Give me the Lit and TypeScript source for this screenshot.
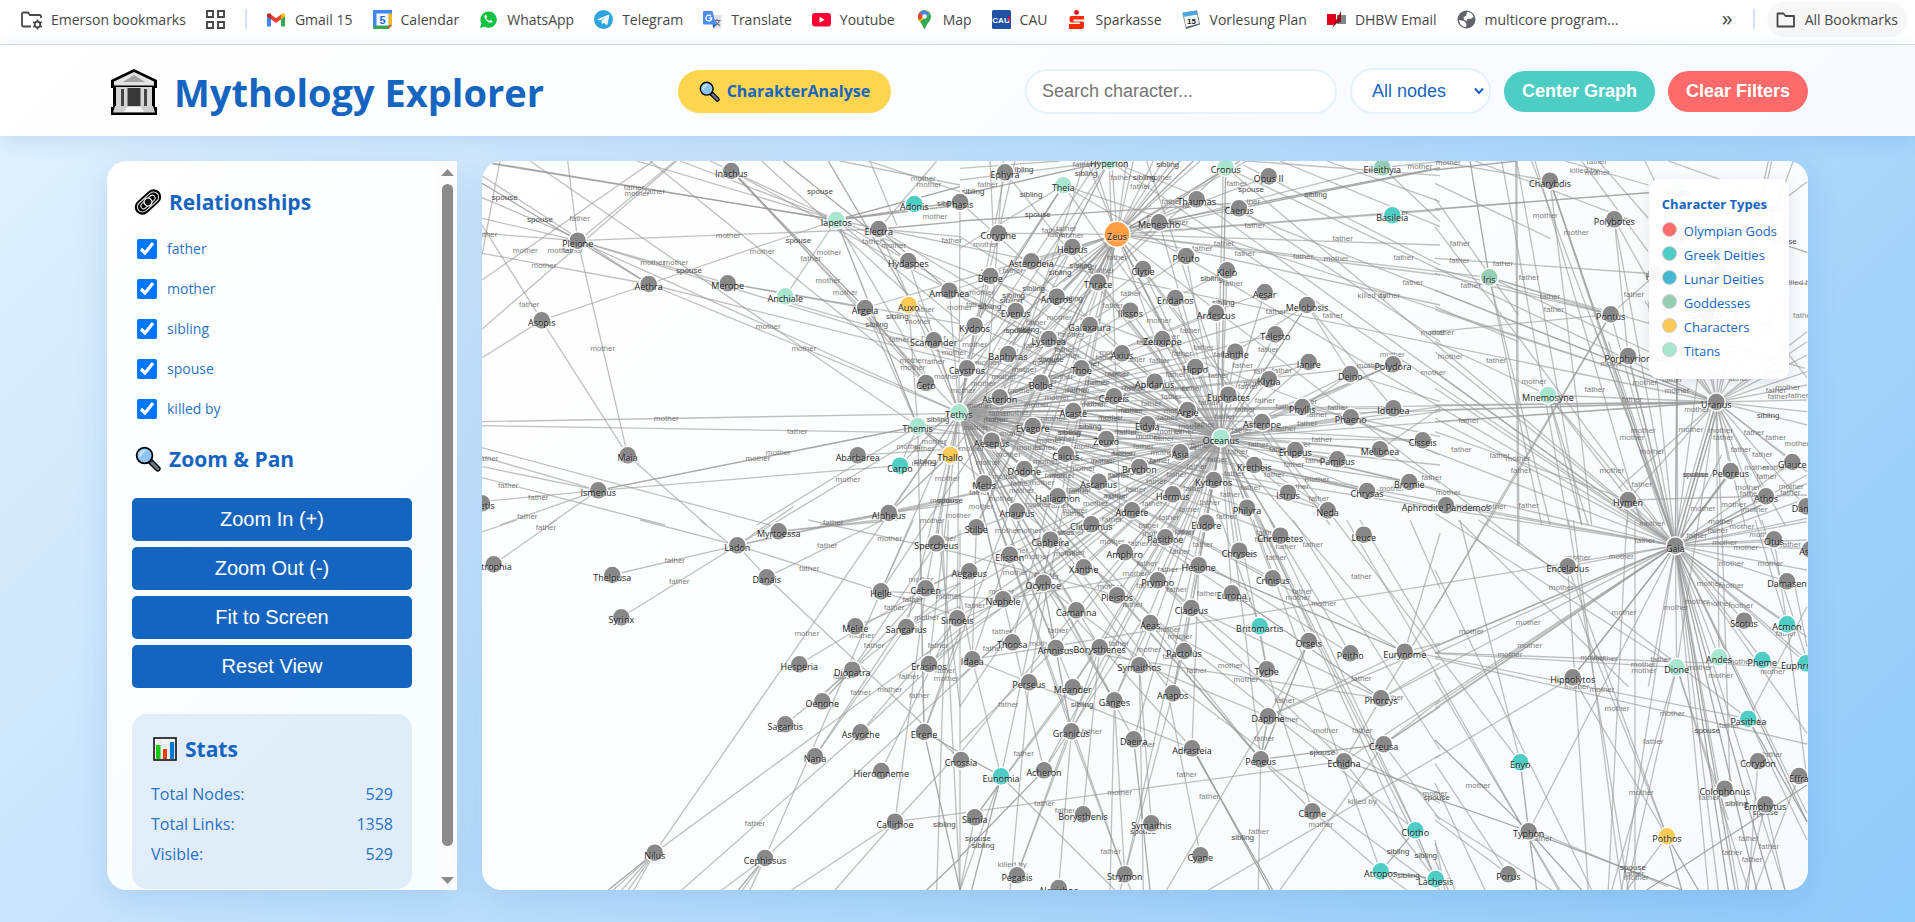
import { LitElement, html, svg, css } from "lit";
import { customElement, property } from "lit/decorators.js";
import { classMap } from "lit/directives/class-map.js";

type Kind = "father" | "mother" | "sibling" | "spouse" | "killed by";
interface GraphNode { name: string; x: number; y: number; type: string }
interface Line { x1: number; y1: number; x2: number; y2: number; strong: boolean }
interface Label { text: Kind; x: number; y: number }

/* The layout is stored per sector, in thirds of a pixel from the sector's origin. */
const SECTORS: Record<string, [number, number]> = {
  A: [-2, -6], B: [478, -6], C: [953, -6],
  D: [-2, 359], E: [478, 359], F: [953, 359],
};
const place = (s: string, x: number, y: number): [number, number] => {
  const [ox, oy] = SECTORS[s];
  return [+(ox + x / 3).toFixed(1), +(oy + y / 3).toFixed(1)];
};

/* name x y [type]: t titan, d deity, g goddess, c character, z Zeus */
const NODE_DATA: Record<string, string> = {
  A: `Inachus 754 48,Adonis 1303 147 d,Iapetos 1069 195 t,Electra 1196 222,Pleione 293 257,Hydaspes 1285 318,Merope 743 385,Aethra 506 387,Anchiale 916 424 t,Argeia 1155 459,Auxo 1286 450 c,Amalthea 1408 407,Asopis 185 496,Scamander 1361 556,Ceto 1338 684,Themis 1313 814 t,Tethys 1437 772 t,Abarbarea 1133 901,Carpo 1260 932 d,Thallo 1411 900 c,Maia 443 901,Ismenus 355 1006,Thetis 6 1045,Alpheus 1226 1074,Phasis 1440 141`,
  B: `Ephyra 135 52,Theia 310 91 t,Hyperion 448 18 t,Cronus 797 37 t,Opus_II 926 64,Eileithyia 1267 37 g,Thaumas 710 133,Caerus 837 160,Basileia 1297 181 d,Menestho 597 202,Zeus 471 238 z,Coryphe 115 235,Hebrus 337 276,Asterodeia 214 319,Plouto 678 303,Clytie 549 342,Kleio 801 346,Beroe 91 363,Thrace 414 382,Anigros 290 425,Eridanos 646 429,Aesar 914 411,Melobosis 1041 450,Evenus 167 468,Ilissos 511 467,Ardescus 768 474,Kydnos 44 512,Galaxaura 389 510,Telesto 946 538,Lysithea 266 552,Zeuxippe 607 552,Baphyras 144 597,Axius 486 595,Ianthe 826 590,Caystrus 21 640,Thoe 364 640,Hippo 706 636,Ianire 1046 621,Polydora 1299 628,Bolbe 242 683,Apidanus 584 680,Klytia 927 673,Deino 1171 657,Asterion 119 727,Cerceis 462 724,Euphrates 805 719,Phyllis 1027 756,Idothea 1300 760,Acaste 340 768,Argie 683 765,Phaeno 1172 787,Evagore 218 813,Eidyia 562 808,Asterope 906 801,Oceanus 783 848 t,Aesepus 95 857,Zeuxo 439 852,Cisseis 1388 856,Caicus 317 897,Asia 661 892,Enipeus 1006 885,Meliboea 1260 883,Pamisus 1132 913,Dodone 193 942,Brychon 538 936,Kretheis 883 930,Metis 72 985,Ascanius 416 980,Kytheros 761 975,Bromie 1348 981,Haliacmon 293 1024,Hermus 638 1018,Istrus 984 1013,Chrysas 1221 1008,Anaurus 171 1069,Admete 516 1066,Philyra 861 1058,Neda 1103 1066`,
  C: `Charybdis 345 77,Polybotes 538 193,Iris 163 367 g,Pontus 527 478,Porphyrion 579 603,Mnemosyne 339 720 t,Hebe 731 106 g,Aristaeus 963 153,Clytius 731 238,Halia 664 357,Enginas 852 349,Gration 814 475,Uranus 844 741,Peloreus 887 948,Glauce 1072 921,Athos 993 1024,Damas 1114 1054,Hymen 579 1035,Aphrodite_Pandemos 33 1051`,
  D: `Thelpusa 397 165,Ladon 772 76,Myrtoessa 896 34,Atrophia 41 133,Danais 860 172,Syrinx 424 292,Spercheus 1369 70,Cebren 1337 205,Helle 1203 214,Melite 1126 319,Sangarius 1279 321,Simoeis 1432 295,Hesperia 958 433,Diopatra 1117 449,Erasinos 1347 432,Oenone 1027 544,Sagaritis 916 613,Nana 1005 709,Astyoche 1142 637,Eirene 1332 636,Hieromneme 1204 753,Cnossia 1443 720,Callirhoe 1245 905,Nilus 524 998,Cephissus 855 1014`,
  E: `Stilbe 49 22,Clitumnus 394 13,Eudore 739 8,Capheira 271 59,Pasithoe 616 52,Chryseis 838 92,Chremetes 961 47,Leuce 1211 44,Elisson 149 104,Amphiro 494 97,Aegaeus 28 154,Xanthe 371 142,Hesione 716 136,Ocyrhoe 250 188,Prymno 593 181,Crinisus 938 175,Nephele 129 238,Pleistos 471 226,Europa 815 220,Camarina 349 271,Cladeus 694 264,Aeas 571 309,Britomartis 899 319 d,Orseis 1046 363,Thoosa 157 367,Amnisus 287 384,Borysthenes 419 382,Pactolus 672 393,Peitho 1171 400,Eurynome 1334 395,Idaea 37 418,Symaithos 538 436,Tyche 920 448,Perseus 207 487,Meander 338 502,Anapos 638 520,Ganges 463 541,Phorcys 1263 535,Daphne 924 589,Granicus 334 634,Daeira 521 658,Adrasteia 696 685,Creusa 1271 673,Peneus 902 718,Echidna 1152 724,Eunomia 123 769 d,Acheron 252 751,Samia 44 892,Borysthenis 369 883,Symaithis 574 910,Carme 1057 874,Clotho 1366 931 d,Cyane 721 1006,Atropos 1262 1054 d,Lachesis 1427 1077 d,Pegasis 171 1066,Strymon 494 1063,Alexirhoe 296 1104`,
  F: `Gaia 721 77,Enceladus 398 139,Otus 1017 58,Asius 1126 88,Damasen 1056 184,Scotus 927 302,Acmon 1056 313 d,Andes 852 412 t,Pheme 982 420 d,Dione 725 442 t,Hippolytos 413 472,Euphrosyne 1113 430 d,Pasithea 940 596 d,Enyo 256 727 d,Corydon 969 724,Effra 1092 768,Colophonus 869 806,Emphytus 991 853,Typhon 281 934,Pothos 696 949 c,Porus 220 1063`,
};

/* relation, parent, children; both ends are named nodes */
const OCEANIDS = `Phasis Ephyra Menestho Hebrus Plouto Clytie Beroe Eridanos Aesar Melobosis Evenus Ilissos Ardescus Kydnos Galaxaura Telesto Lysithea Zeuxippe Baphyras Axius Ianthe Caystrus Thoe Hippo Ianire Polydora Bolbe Apidanus Klytia Asterion Cerceis Euphrates Phyllis Idothea Acaste Argie Evagore Eidyia Asterope Aesepus Zeuxo Cisseis Caicus Asia Enipeus Meliboea Pamisus Dodone Brychon Metis Ascanius Kytheros Bromie Haliacmon Hermus Istrus Chrysas Anaurus Admete Philyra Neda Clitumnus Eudore Capheira Pasithoe Chremetes Elisson Amphiro Xanthe Hesione Ocyrhoe Prymno Crinisus Pleistos Europa Camarina Cladeus Borysthenes Pactolus Peitho Eurynome Symaithos Tyche Meander Anapos Ganges Granicus Daeira Peneus Strymon Acheron Nilus Cephissus Ladon Alpheus Spercheus Cebren Sangarius Simoeis Amnisus Erasinos Hydaspes Scamander Inachus Electra Pleione Nephele Amalthea`;
const RELATIONS: [Kind, string, string][] = [
  ["mother", "Tethys", OCEANIDS + " Aethra"],
  ["father", "Oceanus", OCEANIDS + " Kretheis Phaeno Thrace Kleio Deino Orseis Chryseis"],
  ["father", "Zeus", "Hebe Iris Enyo Clotho Lachesis Eileithyia Auxo Thallo Carpo Eunomia Eirene Britomartis Pasithea Metis Idaea Coryphe Helle Thoosa Perseus Caerus Thaumas Asterodeia Anigros Argeia Oceanus Opus_II Stilbe"],
  ["father", "Uranus", "Mnemosyne Themis Tethys Oceanus Cronus Iapetos Theia Hyperion Dione Andes Peloreus Polybotes"],
  ["mother", "Gaia", "Mnemosyne Themis Tethys Oceanus Cronus Theia Hyperion Iapetos Pontus Porphyrion Clytius Gration Polybotes Typhon Echidna Creusa Charybdis Thaumas Phorcys Uranus Peloreus Enceladus Hippolytos Dione Otus Damasen Scotus Acmon Andes Pheme Euphrosyne Hymen Athos Glauce Idaea Daphne"],
  ["father", "Iapetos", "Anchiale Hydaspes"],
  ["mother", "Pleione", "Electra Merope Maia"],
  ["father", "Ladon", "Thelpusa Syrinx Helle"],
  ["mother", "Themis", "Clotho Carpo Thallo Auxo Eirene Ismenus"],
  ["father", "Asterion", "Hebrus Aesepus"],
  ["father", "Pontus", "Phorcys Iris"],
  ["father", "Peneus", "Daphne Orseis"],
];

/* x1 y1 x2 y2 [!]: remaining edges, "!" marks a doubled edge */
const EDGE_DATA: Record<string, string> = {
  A: `40 25 1069 195!,36 27 1040 190,6 85 293 257!,6 62 506 387,6 128 293 250,6 190 293 257,6 235 293 257,6 295 506 387,6 375 520 18,6 522 590 18,310 245 585 18,293 257 263 18,293 257 506 387!,185 496 443 901,185 496 6 210,185 496 6 608,185 496 506 387,506 387 1069 195,506 387 1437 620,743 385 1437 505,743 385 1155 459,916 440 1437 590,150 18 1313 814,510 18 1338 684,600 18 1069 195,470 18 1069 195,690 18 1069 195,754 48 1155 459!,780 70 1338 684,910 18 1285 318!,845 18 1440 560,1045 18 1361 556!,1170 18 1250 210,1165 18 1440 110,1080 18 1440 90,1069 195 1440 140!,1069 195 1440 95!,1069 195 1440 150!,1069 195 1313 814!,1069 195 1338 660,1069 195 1440 500,1196 222 1440 200!,1196 222 1440 245,1196 222 1370 18,1196 222 1408 407!,6 800 1437 775,6 812 1440 835,355 1006 1260 932,355 1006 1313 814,6 878 870 1110,6 905 355 1006,6 935 355 1006,6 968 555 1110,6 1040 355 1006,60 1110 355 1006,205 1110 355 1006,443 901 680 1110,830 1110 1313 814,1226 1074 1440 1035,1226 1074 1440 1045,1226 1074 1020 1110,1226 1074 1411 900!,6 300 60 18,1133 901 1440 880,1155 459 1338 684!,1155 459 1313 814,1313 814 1440 900!`,
  B: `0 198 820 145!,0 120 448 18!,1440 40 837 160!,1440 38 471 225!,1440 165 540 235,797 37 783 848!,790 37 770 848,840 18 471 238!,860 18 471 238,700 18 471 238!,720 18 471 238,660 18 471 238!,640 18 471 238,610 18 471 238,580 18 471 238,520 18 471 238,500 18 471 238,455 18 471 238,400 18 471 238,380 18 471 238,471 238 1440 360,471 238 1440 270,471 238 1440 450,837 160 1440 560,1100 18 1440 140,960 18 1440 215,850 30 1440 330,1267 37 1440 200,1267 37 1440 20,860 18 1440 62,0 75 448 18,0 40 300 18,90 18 100 235,375 18 95 857,310 91 0 560,310 91 44 512!,448 18 0 700,448 18 144 597!,415 18 0 640,797 37 310 380,310 91 850 848,448 18 480 1100,560 18 800 720,797 37 0 772,0 420 471 238,0 640 471 238!,0 720 471 238!,0 560 471 238,130 18 60 985,165 18 20 640,0 280 310 91,0 245 290 425,783 848 1440 755,783 848 1440 770,1171 657 1440 740,1027 756 1171 657,1027 756 1299 628,1041 450 783 848,1041 450 1300 760,1041 450 1171 657,826 590 1041 450,645 429 801 346,928 673 1046 621,906 801 1299 628,1027 756 1440 845,1171 787 1440 900,1006 885 1440 930,883 930 1440 1060,883 930 1221 1008,984 1013 1103 1066,1260 883 1440 985,1348 981 1440 1010,1260 883 1440 760,471 238 72 1000!,471 238 49 1110,471 238 1110 1110`,
  C: `245 5 252 1172,242 5 248 1172,105 18 163 367!,200 18 400 1110,245 18 440 1110,300 18 620 1110,345 77 470 1110,345 77 690 1110,345 77 721 1172,290 18 700 1110,0 130 250 480,0 162 731 106,0 45 245 18!,120 18 600 200,0 85 345 250,440 18 640 290,490 18 640 190,630 18 660 80,390 18 640 90,0 310 664 357,0 340 527 478,0 355 527 478,163 367 664 600,163 367 345 1110,163 367 320 1110,163 367 1110 640,538 193 579 603,527 478 664 357,527 478 155 1110,0 530 527 478,0 405 844 741,0 465 844 741,0 560 339 720,0 590 721 1172,339 720 640 1110,339 720 460 1110,339 720 440 1110,0 750 844 741,0 765 844 741,0 800 844 741,0 830 579 1035,0 790 721 1172,0 700 721 1172,0 650 721 1172,0 215 721 1172,0 455 250 560,1000 18 844 741,1010 18 850 741,1116 80 844 290,700 18 930 100,1075 18 1000 220,1050 270 1116 292!,725 380 728 1110,721 1172 725 640,1000 520 1116 668,1040 380 1116 387,844 741 1116 560,844 741 1116 600,844 741 1116 650,844 741 1116 690,844 741 1116 735,844 741 1116 770,844 741 1116 810,844 741 1072 921,844 741 993 1024,844 741 1116 950,844 741 1050 1110,844 741 1116 1060,844 741 980 1110,844 741 930 1110,844 741 721 1172!,854 741 731 1172!,834 741 711 1172,844 741 860 1110,844 741 579 1035,844 741 550 1000,800 550 844 741,860 480 844 741,790 360 844 741,640 500 844 741,630 440 844 741,579 1035 577 1110,579 1035 1116 1020,721 1172 1116 960,721 1172 1116 985,721 1172 1116 1030,721 1172 1116 1090,721 1172 640 440,721 1172 520 560,721 1172 860 900,721 1172 480 520,721 1172 580 600,844 741 1116 530,1060 400 844 741,33 1051 721 1172,345 77 0 18,721 1172 1000 1040!,887 948 721 1172!,721 1172 887 955`,
  D: `6 36 110 0,230 0 41 133,480 0 772 76,660 0 772 90,772 76 860 172,860 172 1443 720,896 34 1200 0,896 34 1250 0,772 76 1226 -20,772 76 940 -40,860 172 1210 0,958 433 1337 205,1117 449 1337 205,1117 449 1369 70,1117 449 1440 190,1027 544 1117 449!,1020 535 1110 445,916 613 1117 449,1005 709 1279 321,1005 709 1337 205,1142 637 605 1110,1142 637 1440 360,1142 637 1432 295,1204 753 1440 260,1245 905 1337 205,1245 905 1443 690,1245 905 935 1110,1245 905 1065 1110,1245 905 1440 880,524 998 385 1110!,524 998 400 1110,524 998 425 1110,524 998 445 1110,524 998 462 1110,855 1014 725 1110,855 1014 775 1110!,855 1014 788 1110,855 1014 810 1110,1332 636 1443 700!,1332 636 1440 1110!,1340 1110 1440 1015!,1332 636 1320 0,1332 636 1440 330,1440 560 1370 0,1440 1110 1385 0,1370 1110 1405 0,1337 205 1440 150,1279 321 1440 260,1126 319 1440 190,1347 432 1440 340,1203 214 1440 225,1203 214 1440 290,985 0 1440 100,1203 214 1300 0`,
  E: `696 685 938 1110!,700 685 930 1110!,902 718 895 1110,902 718 1271 673!,0 880 1152 724,1152 724 1440 820!,1271 673 960 1110,1440 705 745 1110,1057 874 920 448,1057 874 902 718,1057 874 1262 1054,1152 724 1427 1077,721 1006 620 500,924 589 902 718,1046 363 902 718,1046 363 924 589,899 319 920 448,521 658 570 1110!,463 541 450 1110,538 436 574 910,538 436 550 1110,334 634 171 1066,334 634 296 1104,334 634 494 1063,207 487 150 1110,207 487 696 685,419 382 369 883,419 382 171 1066,123 769 35 1110!,123 769 0 1110,252 751 0 1010!,252 751 540 310,123 769 0 700!,123 769 465 1110,250 188 334 634!,494 1063 480 1110,494 1063 512 1110,494 1063 463 541,494 1063 638 520,1366 931 1262 1054!,1366 931 1427 1077!,1262 1054 1427 1077!,1334 395 1440 370,1334 395 1440 412,1334 395 924 589,1263 535 1440 430,1263 535 1152 724,1271 673 1440 540,1271 673 1440 560,716 136 1334 395!,815 220 1263 535!,930 0 1366 931,900 0 1330 931,880 0 1262 1054,1000 0 1440 690,1160 0 1440 480,1200 0 1440 400,1350 0 1440 205,1440 40 1334 395,920 560 1440 850,1271 673 1440 900,1262 1054 1340 1110,902 718 1440 1110,620 1110 924 589,37 418 123 769,37 418 207 487,0 220 37 418,0 670 287 384,0 700 349 271,44 892 419 382,44 892 338 502,0 470 150 340,0 560 250 188,250 188 696 685,250 188 463 541,349 271 920 700,471 226 902 718,571 309 902 718,571 309 1271 673,571 309 463 541,694 264 1263 535,694 264 638 520,716 136 696 685,672 393 638 520,287 384 1263 535,419 382 924 589,593 181 1152 724,0 1110 44 892,0 230 129 238,129 238 716 136,0 100 471 226,49 22 37 418,149 104 349 271,0 30 0 1110,250 188 0 300,250 188 0 340`,
  F: `721 77 820 1110,721 77 850 1110,721 77 880 1110!,721 77 900 1110!,721 77 910 1110,721 77 965 1110!,721 77 1010 1110!,721 77 1050 1110,721 77 1116 905!,721 77 1116 880,721 77 1116 640,721 77 1116 350,721 77 1116 150,721 77 1116 420,721 77 1116 5,721 77 1116 60,721 77 1116 85,721 77 0 380,721 77 0 400,721 77 0 555,721 77 0 565,721 77 413 472!,721 77 640 500,721 77 560 1110,256 727 281 934!,281 934 305 1110!,281 934 0 660!,281 934 740 1110!,281 925 700 1100,281 934 440 1110!,0 400 725 442,0 410 940 596,0 415 1116 672,0 398 852 430,852 430 1116 450,0 150 470 1110,0 460 370 1110,0 480 375 1110,75 0 256 727,0 -20 725 442,70 0 580 500,130 0 380 160,400 0 580 1110,415 0 560 1110,575 0 520 1110,600 0 600 1110,160 0 0 265,413 472 696 949,413 472 0 715,398 139 460 1110,398 139 696 949,430 280 696 949,696 949 740 1110!,696 949 790 1110!,696 949 575 1110,725 442 575 1110,725 442 530 1110,725 442 880 900,725 442 940 1110,1116 795 635 1110!,940 596 1116 905!,940 596 1116 260,940 596 1116 960,969 724 940 1110,991 853 930 1110,991 853 1050 1110,1092 768 960 1110,1080 200 1116 380,860 0 885 800,0 835 281 934!,0 900 220 1063,220 1063 0 730,0 970 60 1110,0 1020 40 1110,30 1110 0 960,0 885 350 1110,150 1110 0 790,960 0 1056 313,980 0 1116 420,1056 313 1116 780,1056 313 1017 58`,
};

/* x y per relation: captions of the remaining edges */
const LABEL_DATA: [string, Kind, string][] = [
  ["A", "father", "462 97,525 109,299 190,278 286,1415 256,148 448,1333 461,1258 552,1364 619,952 829,1333 880,85 991,175 1027,142 1084,1060 1102,25 908"],
  ["A", "mother", "471 115,1330 68,1347 86,1325 76,15 236,136 286,240 286,192 331,588 320,847 287,1047 292,1365 184,1241 271,1044 374,1096 412,865 514,1315 499,1296 616,1299 635,559 790,895 891,1287 874,1362 859,1104 973,1402 970,1357 1096"],
  ["A", "spouse", "1020 109,74 127,180 193,627 346,955 256,1410 1036"],
  ["A", "sibling", "1405 145,1252 484,1190 506,1374 793,1335 919"],
  ["B", "father", "83 86,368 26,482 67,541 94,635 138,830 85,870 138,276 226,319 219,655 202,884 211,1148 250,792 265,727 280,854 295,1331 307,1358 382,471 307,818 385,1290 419,158 346,512 415,458 451,948 469,1118 481,690 526,925 583,965 646,915 736,1415 967"],
  ["B", "mother", "598 65,1380 34,334 241,77 268,1129 310,425 346,65 412,1420 532,298 487,597 496,1297 598,1228 631,1420 652,1296 998,1071 973"],
  ["B", "sibling", "186 43,39 109,213 118,378 55,623 28,552 65,1067 118,1071 118,362 331,300 352,755 370,221 398,161 419,153 434,90 454,335 430,790 442,204 523,390 812,328 831"],
  ["B", "spouse", "873 103,233 178,175 526,273 613"],
  ["B", "killed by", "1236 420"],
  ["C", "father", "485 18,75 265,73 316,204 325,282 367,107 391,597 418,357 463,184 616,479 703,591 733,712 673,910 670,865 847,1023 706,1028 724,1090 721,957 832,1022 847,918 883,982 898,79 883,194 901,258 946,620 988,945 1015,1066 1010,183 1054,281 1051,1105 481,995 964,1025 163,970 376,691 469,848 547,829 610,1018 649"],
  ["C", "mother", "40 20,487 52,331 181,424 232,20 532,46 604,5 652,297 679,533 625,630 682,726 706,842 664,785 763,768 823,857 826,1058 697,1086 865,625 826,591 847,651 889,249 910,531 946,938 997,1069 994,896 1048,960 1063,804 1060,857 1099,965 937,1020 935,784 169,865 592"],
  ["C", "sibling", "999 781,685 610"],
  ["C", "spouse", "782 958,785 958,1046 259"],
  ["C", "killed by", "448 46,1093 381,967 508"],
  ["D", "father", "198 22,1060 7,1042 76,1298 238,1243 262,1182 376,1374 376,1287 469,1142 517,1318 526,825 910,1395 451,1090 468"],
  ["D", "mother", "1229 55,1323 178,1340 292,1145 346,1399 475,1229 508,1405 229"],
  ["D", "sibling", "1393 911"],
  ["E", "father", "566 14,675 34,728 73,1058 73,949 112,1204 169,660 94,255 163,344 95,561 130,623 148,650 208,741 220,1027 214,127 333,294 331,518 253,476 370,99 385,45 256,710 451,1204 475,974 541,145 553,395 634,985 598,1207 631,913 655,191 700,680 763,748 829,253 850,315 871,896 934,452 994,1300 532,555 673"],
  ["E", "mother", "142 31,207 31,457 64,166 157,230 109,525 160,1014 232,625 327,660 349,567 388,811 436,858 478,1097 631,479 817,1082 913,1425 820"],
  ["E", "sibling", "366 553,848 952,69 976,1314 994,1397 1006,1345 1066"],
  ["E", "spouse", "1087 697,54 955,549 934"],
  ["E", "killed by", "1207 844,157 1033"],
  ["F", "father", "785 46,629 61,1067 73,1053 340,677 418,883 616,655 664,1012 703,823 832,941 955,1002 979,891 997,951 1018,321 955,597 1059"],
  ["F", "mother", "857 5,921 19,869 67,933 82,980 43,430 112,559 109,889 130,1006 130,379 202,823 190,889 196,787 244,851 250,723 262,567 277,280 307,109 334,284 376,225 403,473 412,511 415,625 433,626 449,794 442,857 466,1013 454,915 424,425 497,546 565,712 580,129 796,619 817,604 1072"],
  ["F", "sibling", "904 850"],
  ["F", "spouse", "817 631,5 832,991 877,594 1042"],
];

const nodes: GraphNode[] = [];
const byName = new Map<string, GraphNode>();
for (const [s, list] of Object.entries(NODE_DATA)) {
  for (const item of list.split(",")) {
    const [key, a, b, type = "n"] = item.trim().split(" ");
    const [x, y] = place(s, +a, +b);
    const n = { name: key.replace("_", " "), x, y, type };
    nodes.push(n);
    byName.set(key, n);
  }
}

const lines: Line[] = [];
const labels: Label[] = [];
/* A caption that would all but cover an equal one is left out. */
const addLabel = (l: Label) => {
  const near = labels.some((o) => o.text === l.text && Math.abs(o.x - l.x) < 5 && Math.abs(o.y - l.y) < 3);
  if (!near) labels.push(l);
};
for (const [s, text, list] of LABEL_DATA) {
  for (const item of list.split(",")) {
    const [a, b] = item.split(" ").map(Number);
    const [x, y] = place(s, a, b);
    addLabel({ text, x, y });
  }
}
for (const [text, parent, children] of RELATIONS) {
  const p = byName.get(parent)!;
  for (const child of children.split(" ")) {
    const c = byName.get(child)!;
    lines.push({ x1: p.x, y1: p.y, x2: c.x, y2: c.y, strong: false });
    addLabel({ text, x: (p.x + c.x) / 2, y: (p.y + c.y) / 2 });
  }
}
for (const [s, list] of Object.entries(EDGE_DATA)) {
  for (const item of list.split(",")) {
    const strong = item.endsWith("!");
    const [a, b, c, d] = item.replace("!", "").split(" ").map(Number);
    const [x1, y1] = place(s, a, b);
    const [x2, y2] = place(s, c, d);
    lines.push({ x1, y1, x2, y2, strong });
  }
}

@customElement("myth-graph")
class MythGraph extends LitElement {
  static styles = css`
    :host { display: block; min-height: 0; overflow: hidden; position: relative; border-radius: 20px;
      background: linear-gradient(135deg, #ffffff, #f6faff); box-shadow: 0 8px 32px rgba(21, 101, 192, 0.15); }
    .canvas { display: block; width: 100%; height: 100%; }
    .edge { stroke: #999; stroke-opacity: 0.62; stroke-width: 1.3px; }
    .edge.strong { stroke-opacity: 0.85; }
    .caption { font: 8px "Liberation Sans", Arial, sans-serif; fill: #666; fill-opacity: 0.85; text-anchor: middle; }
    .caption.strong { fill: #4a4a4a; fill-opacity: 1; }
    .dot { stroke: #fff; stroke-width: 1.5px; fill: #888; }
    .dot.t { fill: #a8e6cf; }
    .dot.d { fill: #4ecdc4; }
    .dot.g { fill: #96ceb4; }
    .dot.c { fill: #feca57; }
    .dot.z { fill: #ff9f43; }
    .name { font: 9px "Open Sans", "Noto Sans", sans-serif; fill: #1c1c1c; text-anchor: middle;
      text-shadow: 1px 1px 2px rgba(255, 255, 255, 0.8); }
    .legend { position: absolute; top: 18px; right: 19px; box-sizing: border-box; padding: 15px 12px 16px 13px;
      border-radius: 10px; background: rgba(255, 255, 255, 0.95); box-shadow: 0 4px 15px rgba(0, 0, 0, 0.1);
      color: #1565c0; font: 13px/24px "Open Sans", "Noto Sans", sans-serif; white-space: nowrap; }
    .legend h4 { margin: 0 0 5px; font-size: 13px; line-height: 20px; font-weight: 700; }
    .legend ul { margin: 0; padding: 0; list-style: none; }
    .legend li { display: flex; align-items: center; gap: 7px; }
    .swatch { box-sizing: border-box; width: 15px; height: 15px; border-radius: 50%; border: 1px solid #ccc; margin-bottom: 4px; }
    .olympian { background: #ff6b6b; } .greek { background: #4ecdc4; } .lunar { background: #45b7d1; }
    .goddess { background: #96ceb4; } .character { background: #feca57; } .titan { background: #a8e6cf; }
  `;
  render() {
    const dark = (t: Kind) => t === "spouse" || t === "sibling";
    const legend = [["olympian", "Olympian Gods"], ["greek", "Greek Deities"], ["lunar", "Lunar Deities"],
      ["goddess", "Goddesses"], ["character", "Characters"], ["titan", "Titans"]];
    return html`
      <svg class="canvas" role="img" aria-label="Family graph">
        ${lines.map((l) => svg`<line class=${classMap({ edge: true, strong: l.strong })} x1=${l.x1} y1=${l.y1} x2=${l.x2} y2=${l.y2}></line>`)}
        ${labels.map((l) => svg`<text class=${classMap({ caption: true, strong: dark(l.text) })} x=${l.x} y=${l.y + 3}>${l.text}</text>`)}
        ${nodes.map((n) => svg`<circle class="dot ${n.type}" cx=${n.x} cy=${n.y} r=${n.type === "z" ? 13 : 9}></circle>`)}
        ${nodes.map((n) => svg`<text class="name" x=${n.x} y=${n.y + 6}>${n.name}</text>`)}
      </svg>
      <div class="legend">
        <h4>Character Types</h4>
        <ul>${legend.map(([c, t]) => html`<li><span class="swatch ${c}"></span>${t}</li>`)}</ul>
      </div>`;
  }
}

const magnifier = html`<svg class="glyph" viewBox="0 0 24 24" aria-hidden="true">
  <path d="M13.5 13.5 21 21" stroke="#000" stroke-width="5.4" stroke-linecap="round"/>
  <path d="M15.6 15.6 21 21" stroke="#64798a" stroke-width="2.8" stroke-linecap="round"/>
  <circle cx="8.8" cy="8.8" r="7.3" fill="#8ec5f4" stroke="#000" stroke-width="1.6"/>
  <path d="M4 10.5A5 5 0 0 1 10.500 4L4 10.500Z" fill="#c4e2fb"/>
</svg>`;

const chain = html`<svg class="glyph" viewBox="0 0 24 24" fill="none" aria-hidden="true">
  <g transform="rotate(-42 12 12)">
    <rect x="-2" y="5" width="28" height="14" rx="7" fill="#000"/>
    <rect x="0.500" y="7.200" width="23" height="9.600" rx="4.800" stroke="#ddd" stroke-width="1"/>
    <rect x="4" y="9.400" width="16" height="5.200" rx="2.600" stroke="#ddd" stroke-width="1"/>
    <circle cx="12" cy="12" r="3.600" fill="#111" stroke="#fff" stroke-width="1.200"/>
  </g>
</svg>`;

const chart = html`<svg class="glyph" viewBox="0 0 24 24" aria-hidden="true">
  <rect x="1" y="1" width="22" height="22" fill="#f4f4f4" stroke="#111" stroke-width="1.600"/>
  <path d="M2 8h20M2 15h20M8 2v20M16 2v20" stroke="#ddd" stroke-width=".8"/>
  <rect x="3" y="8" width="4.500" height="14" fill="#16c60c"/><rect x="10" y="12" width="4" height="10" fill="#f03a17"/><rect x="17" y="5" width="4.200" height="17" fill="#0078d7"/>
</svg>`;

const temple = html`<svg class="temple" viewBox="0 0 46 46" aria-hidden="true">
  <path d="M23 0 46 11v8h-2v19h2v8H0v-8h2V19H0v-8Z" fill="#000"/>
  <path d="M23 3 43 12.500v4H3v-4Z" fill="#e3e3e3"/><path d="M23 6 34 13H12Z" fill="#a2a2a2"/>
  <path d="M5 18h36v20H5Z" fill="#d5d5d5"/><path d="M16.500 19h13v19h-13Z" fill="#383838"/>
  <path d="M10 20h3v17h-3ZM33 20h3v17h-3Z" fill="#444"/>
  <path d="M4 37h38l2 6.500H2Z" fill="#cfcfcf"/><path d="M16 38h14l3 5H13Z" fill="#f5f5f5"/>
</svg>`;

const icons: Record<string, unknown> = {
  folderGear: svg`<path d="M11 16.500H3.500A1.500 1.500 0 0 1 2 15V4a1.500 1.500 0 0 1 1.500-1.500H8l2 2.500h9.500A1.500 1.500 0 0 1 21 6.500V8" fill="none" stroke="#474747" stroke-width="1.800"/><circle cx="17.500" cy="14.500" r="2.800" fill="none" stroke="#474747" stroke-width="1.800"/><path d="M17.500 9.500v2M17.500 17.500v2M13.200 12l1.700 1M20.100 16l1.700 1M13.200 17l1.700-1M20.100 13l1.700-1" stroke="#474747" stroke-width="1.800"/>`,
  grid: svg`<path d="M1 1h6v6H1ZM12 1h6v6h-6ZM1 12h6v6H1ZM12 12h6v6h-6Z" fill="none" stroke="#474747" stroke-width="1.900"/>`,
  gmail: svg`<path d="M0 5v11.500h4V8.500Z" fill="#4285f4"/><path d="M18 5v11.500h-4V8.500Z" fill="#34a853"/><path d="M4 4.500 9 8.300l5-3.800v4.800l-5 3.800-5-3.800Z" fill="#ea4335"/><path d="M0 5.500C0 3 2.500 2.500 4 4v5.300L0 6.500Z" fill="#c5221f"/><path d="M18 5.500C18 3 15.500 2.500 14 4v5.300l4-2.800Z" fill="#fbbc04"/>`,
  calendar: svg`<path d="M0 0h19v15l-4 4H0Z" fill="#4285f4"/><path d="M15.500 3.500H19V15h-3.500Z" fill="#fbbc04"/><path d="M3.500 15.500H16V19H1a1 1 0 0 1-1-1v-2.500Z" fill="#34a853"/><path d="M15.500 15.500H19L15.500 19Z" fill="#ea4335"/><path d="M3.500 3.500h12v12h-12Z" fill="#fff"/><text x="9.500" y="13.500" text-anchor="middle" font-size="11" font-weight="700" font-family="Liberation Sans, sans-serif" fill="#1967d2">5</text>`,
  whatsapp: svg`<path d="m1 18 1.300-4.600A8.200 8.200 0 1 1 5.600 16.800Z" fill="#10c144"/><path d="M6.300 4.800c-1 .6-1.400 2 .1 4.300 1.700 2.700 4 4.100 5.700 3.700 1.300-.3 1.700-1.300 1.400-1.800l-2.100-1-1 1.100c-1.500-.6-2.600-1.700-3.200-3l.8-1-.9-2.200Z" fill="#fff"/>`,
  telegram: svg`<circle cx="9.500" cy="9.500" r="9.500" fill="#2ea4de"/><path d="m3.500 9.300 11-4.500c.6-.2 1 .2.800.9l-1.900 8.700c-.2.600-.6.700-1.100.4l-2.800-2.100-1.500 1.500-.7-3.300 5-4.500-6.200 4-2.500-.6Z" fill="#fff"/>`,
  translate: svg`<path d="M9 5h9.500v13.500H10Z" fill="#dfe1e5"/><path d="M11 10.500h6.500M14 9v1.500M16.500 10.500c-.5 2.500-2.500 4-4.500 5M12.500 11.500c.8 1.800 2.500 3.200 4.500 4" stroke="#5f6f80" stroke-width="1.100" fill="none"/><path d="M1 1h8.500l3.500 13.500H1a1 1 0 0 1-1-1V2a1 1 0 0 1 1-1Z" fill="#4b8df8"/><path d="m9.500 14.500 1 4 2.500-4Z" fill="#1a56c4"/><path d="M8 6.200A2.900 2.900 0 1 0 8.700 8H6.200" fill="none" stroke="#fff" stroke-width="1.300"/>`,
  youtube: svg`<rect y="3" width="19" height="13.500" rx="3.200" fill="#ff0033"/><path d="m7.500 6.700 5.200 3-5.200 3Z" fill="#fff"/>`,
  map: svg`<path d="M9.500 0a6.500 6.500 0 0 1 6.500 6.500c0 5-4.500 6.500-6 12.500h-1C7.500 13 3 11.500 3 6.500A6.500 6.500 0 0 1 9.500 0Z" fill="#34a853"/><path d="M9.500 0A6.500 6.500 0 0 1 15 3L5 12C3.700 10.300 3 9 3 6.500A6.500 6.500 0 0 1 9.500 0Z" fill="#fbbc04"/><path d="M9.500 0 15 3 9 8 4.500 2.500A6.500 6.500 0 0 1 9.500 0Z" fill="#4285f4"/><path d="M4.500 2.500 9 6.500 4 10A6.500 6.500 0 0 1 4.500 2.500Z" fill="#ea4335"/><circle cx="9.500" cy="6.500" r="2.300" fill="#fff"/>`,
  cau: svg`<rect width="19" height="19" rx="1.500" fill="#2152a3"/><text x="9" y="12.500" text-anchor="middle" font-size="8" font-weight="700" font-family="Liberation Sans, sans-serif" fill="#fff">CAU</text><path d="M17 6v5" stroke="#e4002c" stroke-width="1.500"/>`,
  sparkasse: svg`<circle cx="9.500" cy="2.400" r="2.400" fill="#f00"/><path d="M17 6H4.500a2 2 0 0 0-2 2v2.500a2 2 0 0 0 2 2H13v1.500H2v5h12.500a2.500 2.500 0 0 0 2.500-2.500v-3a2 2 0 0 0-2-2H6.500V9.500H17Z" fill="#ff2a00"/>`,
  plan: svg`<path d="m.5 3 14.500-2.500 3 14L4 19Z" fill="#55606a"/><path d="m1.500 4 13-2.500L17 13.500 4 17Z" fill="#fafafa"/><path d="m.5 2.500 14-2 1 4L1.200 7Z" fill="#4aa6dc"/><text x="9.500" y="14" text-anchor="middle" font-size="8" font-weight="700" font-family="Liberation Sans, sans-serif" fill="#222">15</text>`,
  dhbw: svg`<path d="M0 4h9v9L6 15H0Z" fill="#e2001a"/><path d="M10 5h9v9h-9Z" fill="#7d8790"/><path d="M5 18 14 1v11l-4 1Z" fill="#9c0d16"/>`,
  globe: svg`<circle cx="9.500" cy="9.500" r="9" fill="#5f6368"/><path d="M10 2c3-.3 6 2 6.500 5l-3 2-3-.5-.5 2.500-3-1-.5-3 2.500-1ZM2 10l5 1 2.500 3-.5 3C5 17 2.500 14 2 10Z" fill="#fff"/>`,
  folder: svg`<path d="M1.500 3.500h6l2 2.500h8.500v10.500h-16.500Z" fill="none" stroke="#474747" stroke-width="1.800" stroke-linejoin="round"/>`,
};
const icon = (name: string, w = 19) =>
  html`<svg class="mark" width=${w} height="19" viewBox="0 0 ${w} 19" aria-hidden="true">${icons[name]}</svg>`;

@customElement("app-root")
class AppRoot extends LitElement {
  @property() query = "";

  static styles = css`
    :host { display: flex; flex-direction: column; height: 100vh; box-sizing: border-box; overflow: hidden;
      font-family: "Open Sans", "Noto Sans", sans-serif; color: #1565c0;
      background: linear-gradient(135deg, #e3f2fd 0%, #bbdefb 50%, #90caf9 100%); }
    .bookmarks { display: flex; align-items: center; gap: 20px; flex: none; height: 45px; box-sizing: border-box;
      padding: 0 8px 6px 20px; background: #fff; border-bottom: 1px solid #dcdfe0; font-size: 14px; }
    .bookmarks a { display: flex; align-items: center; gap: 9px; color: #474747; text-decoration: none; white-space: nowrap; }
    .mark { flex: none; overflow: visible; }
    .rule { width: 2px; height: 20px; background: #d3e3fd; }
    .more { margin-left: auto; border: 0; background: none; color: #474747; font: 22px/20px "Open Sans", sans-serif; padding: 0 0 4px; }
    .bookmarks a.all { padding: 8px 9px; margin-left: -8px; border-radius: 18px; background: #f7f7f7; }
    .top { flex: none; background: linear-gradient(135deg, #ffffff, #f6faff); box-shadow: 0 4px 20px rgba(21, 101, 192, 0.15); z-index: 1; }
    .inner { display: flex; align-items: center; justify-content: space-between; max-width: 1701px; margin: 0 auto; padding: 22px 0 21px; }
    h1 { display: flex; align-items: center; gap: 17px; margin: 0; padding: 2px 0 0 4px; font-size: 38px; line-height: 46px; }
    .temple { width: 46px; height: 46px; }
    .analyse { display: flex; align-items: center; gap: 7px; padding: 10px 21px; border: 0; border-radius: 22px;
      background: #ffd54f; color: #1565c0; font: 700 16px/23px "Open Sans", "Noto Sans", sans-serif; }
    .glyph { flex: none; width: 21px; height: 21px; overflow: visible; }
    .tools { display: flex; align-items: center; gap: 13px; font-family: "Liberation Sans", Arial, sans-serif; }
    .tools input, .tools select, .tools button { font: 18px/21px "Liberation Sans", Arial, sans-serif; box-sizing: border-box; }
    .tools input { width: 312px; height: 45px; padding: 0 15px; border: 2px solid #e3f2fd; border-radius: 25px; background: #fff; }
    .tools input::placeholder { color: #757575; }
    .pick { display: grid; align-items: center; }
    .pick select { grid-area: 1 / 1; width: 141px; height: 46px; padding: 0 20px; border: 2px solid #e3f2fd; border-radius: 25px;
      background: #fff; color: #1565c0; appearance: none; }
    .pick svg { grid-area: 1 / 1; justify-self: end; margin-right: 7px; pointer-events: none; }
    .tools button { height: 41px; padding: 0 18px; border: 0; border-radius: 21px; color: #fff; font-weight: 700; }
    .center { background: #4ecdc4; } .clear { background: #ff6b6b; }
    .main { flex: 1; min-height: 0; display: grid; grid-template-columns: 350px minmax(0, 1fr); grid-template-rows: minmax(0, 1fr);
      gap: 25px; width: 100%; max-width: 1701px; margin: 0 auto; padding: 25px 0 32px; box-sizing: border-box; }
    .side { display: flex; overflow: hidden; min-height: 0; border-radius: 20px 0 0 20px;
      background: linear-gradient(135deg, #ffffff, #f6fcff); box-shadow: 0 8px 32px rgba(21, 101, 192, 0.15); }
    .content { flex: 1; padding: 25px 25px 0; overflow: hidden; }
    .scroll { flex: none; width: 20px; display: flex; flex-direction: column; align-items: center; gap: 8px; padding: 8px 0 6px; box-sizing: border-box; background: #fcfcfc; }
    .thumb { width: 11px; height: 662px; border-radius: 6px; background: #8b8b8b; }
    .down { margin-top: auto; }
    h2 { display: flex; align-items: center; gap: 8px; margin: 0; padding-left: 3px; font-size: 21px; line-height: 32px; }
    h2 .glyph { width: 26px; height: 26px; }
    .kinds { display: grid; gap: 20px; margin: 21px 0 24px; }
    .kinds label { display: flex; align-items: center; gap: 10px; padding-left: 5px; font-size: 14px; line-height: 20px; color: #2a72c5; }
    .kinds input { width: 20px; height: 20px; margin: 0; accent-color: #0075ff; }
    .zoom { display: grid; gap: 6px; margin: 23px 0 26px; }
    .zoom button { height: 43px; border: 0; border-radius: 5px; background: #1565c0; color: #fff; font: 20px/23px "Liberation Sans", Arial, sans-serif; }
    .stats { padding: 19px 19px 20px; border-radius: 15px; background: rgba(21, 101, 192, 0.1); }
    .stats h2 { padding-left: 2px; }
    .stats h2 .glyph { width: 24px; height: 24px; }
    dl { display: grid; grid-template-columns: 1fr auto; margin: 14px 0 0; font-size: 16px; line-height: 30px; color: #2a72c5; }
    dd { margin: 0; text-align: right; }
  `;

  render() {
    const marks: [string, string][] = [["gmail", "Gmail 15"], ["calendar", "Calendar"], ["whatsapp", "WhatsApp"], ["telegram", "Telegram"],
      ["translate", "Translate"], ["youtube", "Youtube"], ["map", "Map"], ["cau", "CAU"], ["sparkasse", "Sparkasse"],
      ["plan", "Vorlesung Plan"], ["dhbw", "DHBW Email"], ["globe", "multicore program..."]];
    const kinds = ["father", "mother", "sibling", "spouse", "killed by"];
    const actions = ["Zoom In (+)", "Zoom Out (-)", "Fit to Screen", "Reset View"];
    return html`
      <nav class="bookmarks" aria-label="Bookmarks">
        <a href="#">${icon("folderGear", 22)}Emerson bookmarks</a>
        <a href="#" aria-label="Tab groups">${icon("grid")}</a>
        <span class="rule"></span>
        ${marks.map(([i, t]) => html`<a href="#">${icon(i)}${t}</a>`)}
        <button class="more" aria-label="More bookmarks">»</button>
        <span class="rule"></span>
        <a class="all" href="#">${icon("folder", 20)}All Bookmarks</a>
      </nav>
      <header class="top">
        <div class="inner">
          <h1>${temple}Mythology Explorer</h1>
          <button class="analyse">${magnifier}CharakterAnalyse</button>
          <div class="tools">
            <input type="text" aria-label="Search character" placeholder="Search character..." .value=${this.query}>
            <div class="pick">
              <select aria-label="Node filter"><option>All nodes</option></select>
              <svg width="10" height="8" viewBox="0 0 10 8" aria-hidden="true"><path d="m1 1.500 4 4.500 4-4.500" fill="none" stroke="#1565c0" stroke-width="2"/></svg>
            </div>
            <button class="center">Center Graph</button>
            <button class="clear">Clear Filters</button>
          </div>
        </div>
      </header>
      <main class="main">
        <aside class="side">
          <div class="content">
            <h2>${chain}Relationships</h2>
            <div class="kinds">${kinds.map((k) => html`<label><input type="checkbox" checked>${k}</label>`)}</div>
            <h2>${magnifier}Zoom &amp; Pan</h2>
            <div class="zoom">${actions.map((a) => html`<button>${a}</button>`)}</div>
            <section class="stats">
              <h2>${chart}Stats</h2>
              <dl><dt>Total Nodes:</dt><dd>529</dd><dt>Total Links:</dt><dd>1358</dd><dt>Visible:</dt><dd>529</dd></dl>
            </section>
          </div>
          <div class="scroll" aria-hidden="true">
            <svg width="13" height="7" viewBox="0 0 13 7"><path d="M0 7 6.500 0 13 7Z" fill="#8b8b8b"/></svg>
            <span class="thumb"></span>
            <svg class="down" width="13" height="7" viewBox="0 0 13 7"><path d="M0 0h13L6.500 7Z" fill="#8b8b8b"/></svg>
          </div>
        </aside>
        <myth-graph></myth-graph>
      </main>`;
  }
}
